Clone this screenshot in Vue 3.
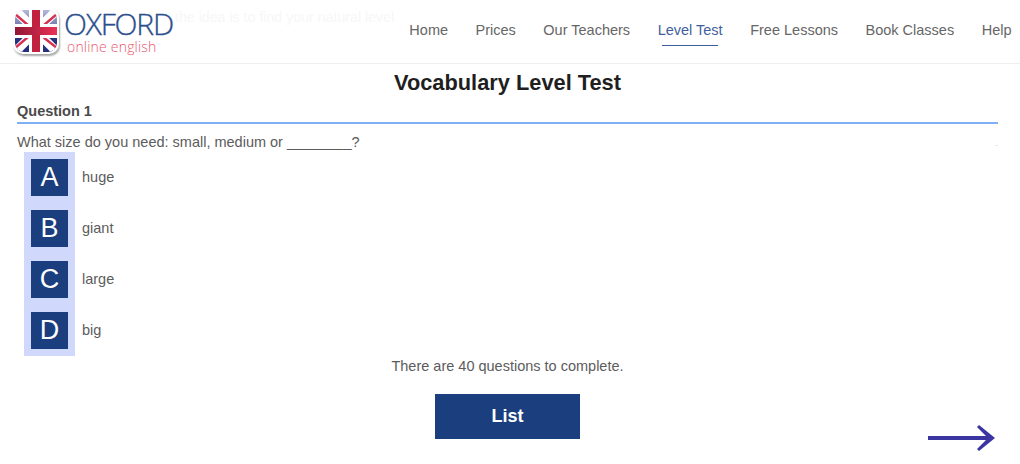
<template>
  <div class="page">
    <header class="topbar">
      <div class="brand">
        <div class="flag-tile">
          <svg viewBox="0 0 42 42" width="42" height="42">
            <defs>
              <linearGradient id="redBar" x1="0" y1="0" x2="1" y2="0">
                <stop offset="0" stop-color="#8f1732" />
                <stop offset="1" stop-color="#ec3157" />
              </linearGradient>
              <linearGradient id="blueField" x1="0" y1="0" x2="0" y2="1">
                <stop offset="0" stop-color="#b4b8d8" />
                <stop offset="0.42" stop-color="#6b74a8" />
                <stop offset="0.55" stop-color="#2a3684" />
                <stop offset="1" stop-color="#232f7e" />
              </linearGradient>
              <clipPath id="tileClip">
                <rect x="0" y="0" width="42" height="42" rx="9" />
              </clipPath>
            </defs>
            <g clip-path="url(#tileClip)">
              <rect width="42" height="42" fill="url(#blueField)" />
              <path d="M0 0L42 42M42 0L0 42" stroke="#fff" stroke-width="9" />
              <path d="M0 4L14 16M42 4L29 15M0 38L13 27M42 38L28 27" stroke="#d5304f" stroke-width="2.4" />
              <path d="M21 0V42M0 21H42" stroke="#fff" stroke-width="14" />
              <rect x="17" y="0" width="8" height="42" fill="#c2203f" />
              <rect x="0" y="17" width="42" height="8" fill="url(#redBar)" />
            </g>
          </svg>
        </div>
        <div class="brand-text">
          <span class="brand-name">OXFORD</span>
          <span class="brand-sub">online english</span>
        </div>
        <span class="ghost">the idea is to find your natural level</span>
      </div>
      <nav class="menu">
        <a v-for="item in menu" :key="item" class="menu-item" :class="{ active: item === 'Level Test' }">{{ item }}</a>
      </nav>
    </header>

    <main class="content">
      <h1>Vocabulary Level Test</h1>
      <h2>Question 1</h2>
      <div class="question-row">
        <p class="question">What size do you need: small, medium or ________?</p>
        <span class="dot">.</span>
      </div>
      <div class="answers">
        <div v-for="a in answers" :key="a.letter" class="answer">
          <div class="letter-col"><span class="letter">{{ a.letter }}</span></div>
          <span class="answer-text">{{ a.text }}</span>
        </div>
      </div>
      <p class="note">There are 40 questions to complete.</p>
      <div class="actions">
        <button class="list-btn">List</button>
        <svg class="next" viewBox="0 0 67 26" width="67" height="26">
          <path d="M51 0L67 13L51 26L49 24L58 15H0V11H58L49 2Z" fill="#3a35a0" />
        </svg>
      </div>
    </main>
  </div>
</template>

<script setup>
const menu = ['Home', 'Prices', 'Our Teachers', 'Level Test', 'Free Lessons', 'Book Classes', 'Help']

const answers = [
  { letter: 'A', text: 'huge' },
  { letter: 'B', text: 'giant' },
  { letter: 'C', text: 'large' },
  { letter: 'D', text: 'big' }
]
</script>

<style>
html, body {
  margin: 0;
  background: #fff;
}
</style>

<style scoped>
.page {
  width: 1020px;
  height: 464px;
  overflow: hidden;
  font-family: "Liberation Sans", Arial, sans-serif;
  color: #5c5c5c;
}

.topbar {
  height: 63px;
  border-bottom: 1px solid #eee;
  display: flex;
  justify-content: space-between;
}

.brand {
  position: relative;
  display: flex;
  align-items: flex-start;
  padding: 9px 0 0 15px;
}

.flag-tile {
  width: 42px;
  height: 42px;
  padding: 2px;
  background: #fff;
  border-radius: 10px;
  box-shadow: 1px 2px 2px rgba(0, 0, 0, 0.35);
  margin: -1px 0 0 -2px;
}

.flag-tile svg {
  display: block;
}

.brand-text {
  display: flex;
  flex-direction: column;
  margin-left: 5px;
}

.brand-name {
  font-family: "Open Sans", sans-serif;
  font-weight: 300;
  font-size: 30px;
  line-height: 30px;
  color: #2b4f8e;
  letter-spacing: -1.2px;
  -webkit-text-stroke: 0.35px #2b4f8e;
}

.brand-sub {
  font-family: "Open Sans", sans-serif;
  font-weight: 300;
  font-size: 14px;
  line-height: 16px;
  margin-left: 3px;
  letter-spacing: 0.2px;
  color: #e8586f;
}

.ghost {
  position: absolute;
  left: 175px;
  top: 9px;
  font-size: 14.2px;
  line-height: 16px;
  white-space: nowrap;
  color: #f7f7f7;
}

.menu {
  display: flex;
  gap: 27.5px;
  padding-right: 8.5px;
}

.menu-item {
  font-size: 14.5px;
  line-height: 17px;
  padding-top: 22px;
  color: #666;
  position: relative;
  white-space: nowrap;
}

.menu-item.active {
  color: #3f5f9c;
}

.menu-item.active::after {
  content: "";
  position: absolute;
  left: 4px;
  right: 5px;
  top: 45px;
  height: 1px;
  background: #3f5f9c;
}

.content {
  padding: 0 22px 0 17px;
}

h1 {
  margin: 6px 0 0;
  font-size: 21.8px;
  line-height: 26px;
  text-align: center;
  color: #1f1f1f;
}

h2 {
  margin: 7px 0 0;
  padding-bottom: 2px;
  font-size: 14.5px;
  line-height: 17px;
  color: #4a4a4a;
  border-bottom: 2px solid #7fb0f5;
}

.question-row {
  display: flex;
  justify-content: space-between;
  margin-top: 10px;
}

.question {
  margin: 0;
  font-size: 14.5px;
  line-height: 17px;
}

.dot {
  align-self: flex-end;
  margin-bottom: 2px;
  font-size: 8px;
  line-height: 11px;
  color: #c9a07a;
}

.answers {
  margin: 1px 0 0 7px;
}

.answer {
  display: flex;
  align-items: center;
  height: 51px;
}

.answer-text {
  margin: 0 0 2px 7px;
  font-size: 14.5px;
}

.letter-col {
  width: 51px;
  height: 51px;
  background: #d0d9fb;
  display: flex;
  align-items: center;
  justify-content: center;
}

.letter {
  width: 37px;
  height: 37px;
  background: #1a3e7e;
  color: #fff;
  font-size: 27px;
  line-height: 37px;
  text-align: center;
}

.note {
  margin: 2px 0 0;
  font-size: 14.5px;
  line-height: 17px;
  text-align: center;
}

.actions {
  display: grid;
  grid-template-columns: 1fr auto 1fr;
  margin-top: 19px;
}

.list-btn {
  grid-column: 2;
  width: 145px;
  height: 45px;
  border: 0;
  background: #1a3e7e;
  color: #fff;
  font-family: inherit;
  font-weight: bold;
  font-size: 18px;
}

.next {
  grid-column: 3;
  justify-self: end;
  margin: 31px 3px 0 0;
}
</style>
